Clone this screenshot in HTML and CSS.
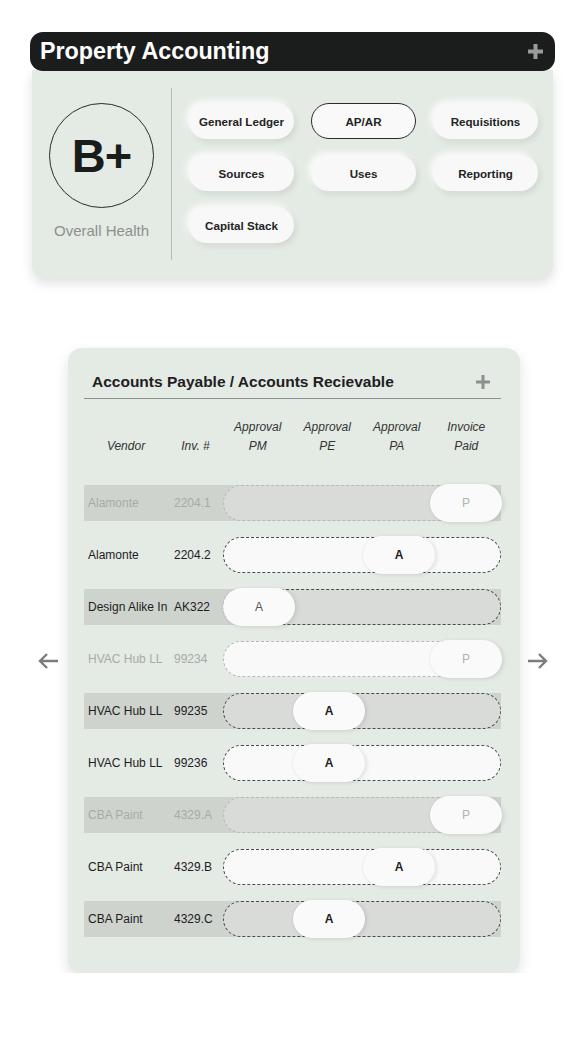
FILE: index.html
```html
<!DOCTYPE html>
<html>
<head>
<meta charset="utf-8">
<link rel="stylesheet" href="styles.css">
</head>
<body>
<div class="page">
  <section class="pa-card">
    <header class="pa-head">
      <h1 class="pa-title">Property Accounting</h1>
      <svg class="plus-big" width="17" height="17" viewBox="0 0 17 17"><path d="M8.5 1v15M1 8.5h15" stroke="#9a9c9b" stroke-width="4"/></svg>
    </header>
    <div class="pa-body">
      <div class="health">
        <div class="grade">B+</div>
        <div class="health-label">Overall Health</div>
      </div>
      <div class="divider"></div>
      <div class="btn-grid">
        <div class="pill">General Ledger</div>
        <div class="pill active">AP/AR</div>
        <div class="pill">Requisitions</div>
        <div class="pill">Sources</div>
        <div class="pill">Uses</div>
        <div class="pill">Reporting</div>
        <div class="pill">Capital Stack</div>
      </div>
    </div>
  </section>

  <div class="ap-wrap">
    <div class="arrow-box left">
      <svg width="22" height="16" viewBox="0 0 22 16"><path d="M21 8H3M10 1L3 8l7 7" fill="none" stroke="#7b7d7c" stroke-width="2.4"/></svg>
    </div>
    <section class="ap-card">
      <div class="ap-head">
        <h2 class="ap-title">Accounts Payable / Accounts Recievable</h2>
        <svg class="plus-small" width="16" height="16" viewBox="0 0 16 16"><path d="M8 1v14M1 8h14" stroke="#8d8f8e" stroke-width="3"/></svg>
      </div>
      <div class="cols">
        <div class="col-h">Vendor</div>
        <div class="col-h">Inv. #</div>
        <div class="col-h">Approval<br>PM</div>
        <div class="col-h">Approval<br>PE</div>
        <div class="col-h">Approval<br>PA</div>
        <div class="col-h">Invoice<br>Paid</div>
      </div>
      <div class="rows">
        <div class="row stripe faded"><span class="vendor">Alamonte</span><span class="inv">2204.1</span><div class="track"><div class="knob pos3">P</div></div></div>
        <div class="row"><span class="vendor">Alamonte</span><span class="inv">2204.2</span><div class="track"><div class="knob pos2">A</div></div></div>
        <div class="row stripe"><span class="vendor">Design Alike In</span><span class="inv">AK322</span><div class="track"><div class="knob pos0 soft">A</div></div></div>
        <div class="row faded"><span class="vendor">HVAC Hub LL</span><span class="inv">99234</span><div class="track"><div class="knob pos3">P</div></div></div>
        <div class="row stripe"><span class="vendor">HVAC Hub LL</span><span class="inv">99235</span><div class="track"><div class="knob pos1">A</div></div></div>
        <div class="row"><span class="vendor">HVAC Hub LL</span><span class="inv">99236</span><div class="track"><div class="knob pos1">A</div></div></div>
        <div class="row stripe faded"><span class="vendor">CBA Paint</span><span class="inv">4329.A</span><div class="track"><div class="knob pos3">P</div></div></div>
        <div class="row"><span class="vendor">CBA Paint</span><span class="inv">4329.B</span><div class="track"><div class="knob pos2">A</div></div></div>
        <div class="row stripe"><span class="vendor">CBA Paint</span><span class="inv">4329.C</span><div class="track"><div class="knob pos1">A</div></div></div>
      </div>
    </section>
    <div class="arrow-box right">
      <svg width="22" height="16" viewBox="0 0 22 16"><path d="M1 8h18M12 1l7 7-7 7" fill="none" stroke="#7b7d7c" stroke-width="2.4"/></svg>
    </div>
  </div>
</div>
</body>
</html>
```
FILE: styles.css
```css
* { box-sizing: border-box; }
html, body { margin: 0; padding: 0; background: #ffffff; }
body { font-family: "Liberation Sans", Arial, sans-serif; color: #1e201f; }

.page { padding-top: 32px; }

.pa-card { margin-left: 30px; width: 525px; }
.pa-head {
  height: 39px;
  background: #1b1d1d;
  border-radius: 13px;
  display: flex;
  align-items: center;
  justify-content: space-between;
  padding: 0 11px 0 10px;
  position: relative;
  z-index: 1;
}
.pa-title { margin: 0; font-size: 23.3px; font-weight: bold; color: #ffffff; letter-spacing: 0; }
.plus-big { display: block; }

.pa-body {
  margin: -1px 2px 0;
  height: 208px;
  background: #e4eae4;
  border-radius: 0 0 13px 13px;
  box-shadow: 0 5px 12px rgba(0,0,0,0.13);
  display: flex;
  padding: 18px 0;
}
.health { width: 139px; display: flex; flex-direction: column; align-items: center; padding-top: 15px; }
.grade {
  width: 105px; height: 105px;
  border: 1px solid #2a2c2b;
  border-radius: 50%;
  display: flex; align-items: center; justify-content: center;
  font-size: 47px; font-weight: bold; color: #1a1c1b;
  letter-spacing: -1px;
}
.health-label { margin-top: 14px; font-size: 15px; color: #8d908e; }
.divider { width: 1px; background: #b7bbb8; }
.btn-grid {
  padding: 15px 0 0 17px;
  display: grid;
  grid-template-columns: repeat(3, 105px);
  grid-auto-rows: 36px;
  column-gap: 17px;
  row-gap: 16px;
  align-content: start;
}
.pill {
  border-radius: 18px;
  background: #f7f8f7;
  box-shadow: -3px -3px 6px rgba(255,255,255,0.8), 2px 3px 6px rgba(0,0,0,0.09);
  display: flex; align-items: center; justify-content: center;
  font-size: 11.6px; font-weight: bold; color: #222423;
}
.pill.active { border: 1px solid #2a2c2b; box-shadow: none; background: #f8f9f8; }

.ap-wrap { margin-top: 70px; margin-left: 28px; display: flex; align-items: center; }
.arrow-box { display: flex; justify-content: center; align-items: center; height: 40px; }
.arrow-box.left { width: 40px; justify-content: flex-start; padding-left: 9px; }
.arrow-box.right { width: 40px; justify-content: flex-start; padding-left: 7px; }

.ap-card {
  width: 452px; height: 625px;
  background: #e4eae4;
  border-radius: 14px;
  box-shadow: 0 6px 14px rgba(0,0,0,0.12);
  padding: 24px 19px 0 16px;
}
.ap-head {
  display: flex; align-items: center; justify-content: space-between;
  border-bottom: 1px solid #8e918f;
  height: 27px;
  padding: 0 10px 6px 8px;
}
.ap-title { margin: 0; font-size: 15.5px; font-weight: bold; color: #1e201f; }
.plus-small { display: block; }

.cols {
  display: grid;
  grid-template-columns: 84px 55px repeat(4, 69.5px);
  grid-template-rows: 38px;
  padding-top: 19px;
  margin-bottom: 29px;
}
.col-h { display: flex; flex-direction: column; justify-content: flex-end; text-align: center; font-size: 12px; font-style: italic; color: #333534; line-height: 19px; }

.rows { display: flex; flex-direction: column; gap: 16px; }
.row {
  height: 36px;
  display: grid;
  grid-template-columns: 84px 55px 278px;
  align-items: center;
  font-size: 12px;
  color: #1e201f;
}
.row.stripe { background: #ced4cd; }
.vendor { padding-left: 4px; white-space: nowrap; overflow: hidden; }
.inv { padding-left: 6px; }
.row.faded .vendor, .row.faded .inv { color: #a7aba8; }

.track {
  position: relative;
  height: 36px;
  border: 1px dashed #4a4c4b;
  border-radius: 18px;
  background: #f8f9f8;
}
.row.stripe .track { background: #d9dbd8; }
.row.faded .track { border-color: #b5b8b6; }
.knob {
  position: absolute;
  top: -2px;
  width: 72px; height: 38px;
  border-radius: 19px;
  background: #f9faf9;
  box-shadow: 2px 1px 4px rgba(0,0,0,0.10), -1px 0 2px rgba(0,0,0,0.04);
  display: flex; align-items: center; justify-content: center;
  font-size: 12px; font-weight: bold; color: #1e201f;
}
.knob.soft { color: #555756; font-weight: normal; }
.row.faded .knob { color: #b0b3b1; font-weight: normal; }
.knob.pos0 { left: -1px; }
.knob.pos1 { left: 69px; }
.knob.pos2 { left: 139px; }
.knob.pos3 { left: 206px; }
```
